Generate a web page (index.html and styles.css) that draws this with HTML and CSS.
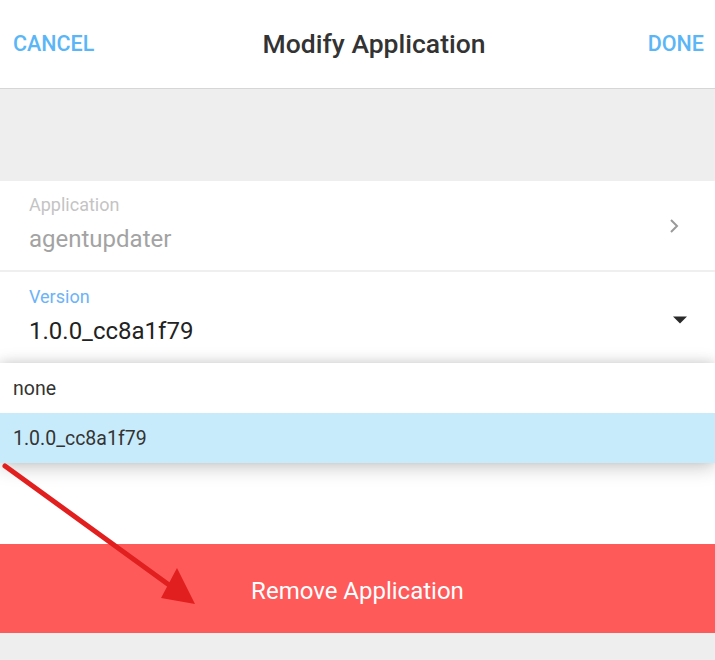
FILE: index.html
```html
<!DOCTYPE html>
<html>
<head>
<meta charset="utf-8">
<link rel="stylesheet" href="styles.css">
</head>
<body>
<div class="page">
  <header class="topbar">
    <span class="action">CANCEL</span>
    <span class="title">Modify Application</span>
    <span class="action">DONE</span>
  </header>
  <div class="spacer"></div>
  <div class="field field-app">
    <div class="field-text">
      <div class="label label-muted">Application</div>
      <div class="value value-muted">agentupdater</div>
    </div>
    <svg class="chevron" width="12" height="16" viewBox="0 0 12 16"><path d="M3 2 L9 8 L3 14" fill="none" stroke="#9a9a9a" stroke-width="2"/></svg>
  </div>
  <div class="divider"></div>
  <div class="field field-version">
    <div class="field-text">
      <div class="label label-blue">Version</div>
      <div class="value">1.0.0_cc8a1f79</div>
    </div>
    <svg class="caret" width="16" height="8" viewBox="0 0 16 8"><path d="M1 0.5 L15 0.5 L8 7.5 Z" fill="#2a2a2a"/></svg>
  </div>
  <div class="menu">
    <div class="option">none</div>
    <div class="option selected">1.0.0_cc8a1f79</div>
  </div>
  <div class="blank"></div>
  <div class="remove">Remove Application</div>
  <div class="footer"></div>
  <svg class="arrow" width="715" height="660" viewBox="0 0 715 660">
    <line x1="5" y1="466" x2="176" y2="590" stroke="#e21f1f" stroke-width="5" stroke-linecap="round"/>
    <polygon points="161,598 177,568 195,604" fill="#e21f1f"/>
  </svg>
</div>
</body>
</html>
```
FILE: styles.css
```css
* { box-sizing: border-box; }
html, body { margin: 0; padding: 0; }
body {
  font-family: Roboto, "Noto Sans", sans-serif;
  background: #eeeeee;
  width: 715px;
  height: 660px;
  overflow: hidden;
}
.page {
  position: relative;
  display: flex;
  flex-direction: column;
  width: 715px;
  height: 660px;
}
.topbar {
  height: 89px;
  background: #fff;
  border-bottom: 1px solid #d6d6d6;
  display: flex;
  align-items: center;
  justify-content: space-between;
  padding: 0 11px 2px 13px;
}
.action {
  font-size: 21.5px;
  font-weight: 500;
  color: #5ab6f7;
}
.title {
  font-size: 26.5px;
  font-weight: 500;
  color: #333;
  margin-left: 6px;
}
.spacer {
  height: 92px;
  background: #eeeeee;
}
.field {
  height: 89px;
  background: #fff;
  display: flex;
  align-items: center;
  justify-content: space-between;
  padding: 0 26px 0 29px;
}
.field-version {
  height: 91px;
  padding-right: 27px;
}
.field-text {
  align-self: flex-start;
  padding-top: 14px;
  display: flex;
  flex-direction: column;
  gap: 10px;
}
.field-version .field-text { padding-top: 15px; }
.label {
  font-size: 18px;
  line-height: 20px;
}
.label-muted { color: #c4c4c4; }
.label-blue { color: #6cb3f8; }
.value {
  font-size: 24px;
  line-height: 28px;
  color: #222;
}
.value-muted { color: #a3a3a3; }
.chevron { margin-top: 1px; margin-right: 9px; }
.caret { margin-top: 4px; }
.divider {
  height: 2px;
  background: #efefef;
}
.menu {
  position: relative;
  z-index: 1;
  background: #fff;
  box-shadow: 0 4px 18px rgba(0,0,0,0.22), 0 -2px 10px rgba(0,0,0,0.08);
}
.option {
  height: 50px;
  display: flex;
  align-items: center;
  padding-left: 13px;
  font-size: 19.5px;
  color: #333;
}
.selected {
  background: #c8ebfb;
}
.blank {
  height: 81px;
  background: #fff;
}
.remove {
  height: 89px;
  background: #ff5a5a;
  color: #fff;
  font-size: 24px;
  display: flex;
  align-items: center;
  justify-content: center;
  padding-top: 4px;
}
.footer {
  flex: 1;
  background: #eeeeee;
}
.arrow {
  position: absolute;
  left: 0;
  top: 0;
  z-index: 2;
  pointer-events: none;
}
```
